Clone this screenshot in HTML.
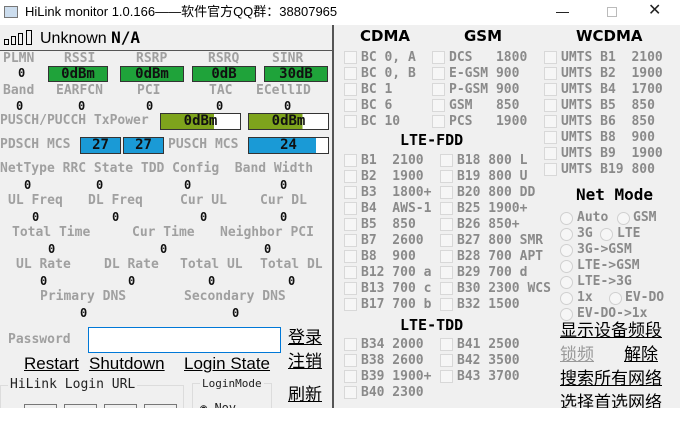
<!DOCTYPE html>
<html><head><meta charset="utf-8"><style>
*{margin:0;padding:0;box-sizing:border-box}
body{width:680px;height:424px;background:#fff;position:relative;overflow:hidden;font-family:"DejaVu Sans Mono","Liberation Mono",monospace}
.a{position:absolute;white-space:pre;line-height:16px}
.l{font-size:13px;font-weight:bold;color:#a0a0a0}
.v{font-size:12px;font-weight:bold;color:#111}
.c{font-size:13px;font-weight:bold;color:#8a8a8a}
.cb{position:absolute;width:13px;height:13px;border:1px solid #d8d8d8;background:#f6f6f6}
.r{position:absolute;width:13px;height:13px;border:1px solid #d0d0d0;border-radius:50%;background:#f6f6f6}
.h{font-family:"DejaVu Sans",sans-serif;font-weight:bold;font-size:15px;color:#000}
.box{position:absolute;border:1px solid #333;font-size:14px;text-align:center;line-height:15px;color:#111;font-weight:bold}
.cn{font-family:"Liberation Sans","Noto Sans CJK SC",sans-serif;font-size:17px;color:#000;text-decoration:underline}
.lk{font-family:"Liberation Sans","Noto Sans CJK SC",sans-serif;font-size:17px;color:#000;text-decoration:underline}
</style></head><body>
<div style="position:absolute;left:0;top:0;width:680px;height:25px;background:#fff"></div>
<div style="position:absolute;left:4px;top:6px;width:14px;height:12px;border:1px solid #777;background:#cde"></div>
<div class="a" style="left:25px;top:4px;font-family:'Liberation Sans','Noto Sans CJK SC',sans-serif;font-size:13px;color:#000">HiLink monitor 1.0.166——软件官方QQ群：38807965</div>
<div class="a" style="left:556px;top:4px;font-family:'Liberation Sans';font-size:13px">—</div>
<div style="position:absolute;left:607px;top:7px;width:10px;height:10px;border:1px solid #bbb"></div>
<div class="a" style="left:648px;top:2px;font-family:'DejaVu Sans';font-size:16px;color:#222">✕</div>
<div style="position:absolute;left:0;top:25px;width:680px;height:383px;background:#f0f0f0"></div>
<div style="position:absolute;left:332px;top:25px;width:2px;height:383px;background:#555"></div>
<div style="position:absolute;left:0;top:50px;width:332px;height:1px;background:#555"></div>
<!-- signal -->
<div style="position:absolute;left:4px;top:39px;width:5px;height:6px;border:1px solid #000"></div>
<div style="position:absolute;left:11px;top:36px;width:5px;height:9px;border:1px solid #000"></div>
<div style="position:absolute;left:18px;top:33px;width:5px;height:12px;border:1px solid #000"></div>
<div style="position:absolute;left:26px;top:30px;width:6px;height:15px;border:1px solid #000"></div>
<div class="a" style="left:40px;top:29px;font-family:'Liberation Sans';font-size:16px;line-height:18px">Unknown <b style="font-family:'DejaVu Sans Mono'">N/A</b></div>
<!-- row 1 -->
<div class="a l" style="left:3px;top:51px">PLMN</div>
<div class="a l" style="left:64px;top:51px">RSSI</div>
<div class="a l" style="left:136px;top:51px">RSRP</div>
<div class="a l" style="left:208px;top:51px">RSRQ</div>
<div class="a l" style="left:272px;top:51px">SINR</div>
<div class="a v" style="left:18px;top:65px">0</div>
<div class="box" style="left:48px;top:66px;width:60px;height:16px;background:#1fa33a">0dBm</div>
<div class="box" style="left:120px;top:66px;width:64px;height:16px;background:#1fa33a">0dBm</div>
<div class="box" style="left:192px;top:66px;width:64px;height:16px;background:#1fa33a">0dB</div>
<div class="box" style="left:264px;top:66px;width:64px;height:16px;background:#1fa33a">30dB</div>
<div class="a l" style="left:3px;top:83px">Band</div>
<div class="a l" style="left:56px;top:83px">EARFCN</div>
<div class="a l" style="left:137px;top:83px">PCI</div>
<div class="a l" style="left:209px;top:83px">TAC</div>
<div class="a l" style="left:256px;top:83px">ECellID</div>
<div class="a v" style="left:16px;top:98px">0</div>
<div class="a v" style="left:78px;top:98px">0</div>
<div class="a v" style="left:146px;top:98px">0</div>
<div class="a v" style="left:216px;top:98px">0</div>
<div class="a v" style="left:284px;top:98px">0</div>
<div class="a l" style="left:0;top:113px">PUSCH/PUCCH TxPower</div>
<div class="box" style="left:160px;top:113px;width:81px;height:17px;background:linear-gradient(90deg,#7ea41c 0 67%,#fff 67%)">0dBm</div>
<div class="box" style="left:248px;top:113px;width:81px;height:17px;background:linear-gradient(90deg,#7ea41c 0 68%,#fff 68%)">0dBm</div>
<div class="a l" style="left:0;top:137px">PDSCH MCS</div>
<div class="box" style="left:80px;top:137px;width:41px;height:17px;background:#1a9ad6;font-size:14px">27</div>
<div class="box" style="left:123px;top:137px;width:41px;height:17px;background:#1a9ad6;font-size:14px">27</div>
<div class="a l" style="left:168px;top:137px">PUSCH MCS</div>
<div class="box" style="left:248px;top:137px;width:81px;height:17px;background:linear-gradient(90deg,#1a9ad6 0 85%,#fff 85%);font-size:14px">24</div>
<div class="a l" style="left:0;top:161px">NetType RRC State TDD Config  Band Width</div>
<div class="a v" style="left:24px;top:177px">0</div>
<div class="a v" style="left:96px;top:177px">0</div>
<div class="a v" style="left:184px;top:177px">0</div>
<div class="a v" style="left:280px;top:177px">0</div>
<div class="a l" style="left:8px;top:193px">UL Freq</div>
<div class="a l" style="left:88px;top:193px">DL Freq</div>
<div class="a l" style="left:180px;top:193px">Cur UL</div>
<div class="a l" style="left:260px;top:193px">Cur DL</div>
<div class="a v" style="left:32px;top:209px">0</div>
<div class="a v" style="left:112px;top:209px">0</div>
<div class="a v" style="left:200px;top:209px">0</div>
<div class="a v" style="left:280px;top:209px">0</div>
<div class="a l" style="left:12px;top:225px">Total Time</div>
<div class="a l" style="left:132px;top:225px">Cur Time</div>
<div class="a l" style="left:220px;top:225px">Neighbor PCI</div>
<div class="a v" style="left:48px;top:241px">0</div>
<div class="a v" style="left:160px;top:241px">0</div>
<div class="a v" style="left:264px;top:241px">0</div>
<div class="a l" style="left:16px;top:257px">UL Rate</div>
<div class="a l" style="left:104px;top:257px">DL Rate</div>
<div class="a l" style="left:180px;top:257px">Total UL</div>
<div class="a l" style="left:260px;top:257px">Total DL</div>
<div class="a v" style="left:40px;top:273px">0</div>
<div class="a v" style="left:128px;top:273px">0</div>
<div class="a v" style="left:208px;top:273px">0</div>
<div class="a v" style="left:288px;top:273px">0</div>
<div class="a l" style="left:40px;top:289px">Primary DNS</div>
<div class="a l" style="left:184px;top:289px">Secondary DNS</div>
<div class="a v" style="left:80px;top:305px">0</div>
<div class="a v" style="left:232px;top:305px">0</div>
<div class="a l" style="left:8px;top:332px">Password</div>
<div style="position:absolute;left:88px;top:327px;width:193px;height:26px;border:1px solid #0078d7;background:#fff"></div>
<div class="a cn" style="left:288px;top:330px">登录</div>
<div class="a lk" style="left:24px;top:355px;line-height:18px">Restart</div>
<div class="a lk" style="left:89px;top:355px;line-height:18px">Shutdown</div>
<div class="a lk" style="left:184px;top:355px;line-height:18px">Login State</div>
<div class="a cn" style="left:288px;top:354px">注销</div>
<div style="position:absolute;left:0;top:385px;width:184px;height:30px;border:1px solid #dcdcdc"></div>
<div class="a" style="left:8px;top:377px;font-size:13px;color:#222;background:#f0f0f0;padding:0 2px">HiLink Login URL</div>
<div style="position:absolute;left:24px;top:404px;width:33px;height:10px;border:1px solid #777"></div>
<div style="position:absolute;left:64px;top:404px;width:33px;height:10px;border:1px solid #777"></div>
<div style="position:absolute;left:104px;top:404px;width:33px;height:10px;border:1px solid #777"></div>
<div style="position:absolute;left:144px;top:404px;width:33px;height:10px;border:1px solid #777"></div>
<div style="position:absolute;left:192px;top:383px;width:80px;height:30px;border:1px solid #dcdcdc"></div>
<div class="a" style="left:200px;top:376px;font-size:11px;color:#222;background:#f0f0f0;padding:0 2px">LoginMode</div>
<div class="a" style="left:200px;top:400px;font-size:12px;color:#222">◉ Nov</div>
<div class="cn a" style="left:288px;top:387px">刷新</div>
<div style="position:absolute;left:0;top:408px;width:680px;height:16px;background:#fff"></div>

<!-- right -->
<div class="a h" style="left:360px;top:28px">CDMA</div>
<div class="a h" style="left:464px;top:28px">GSM</div>
<div class="a h" style="left:576px;top:28px">WCDMA</div>
<div class="cb" style="left:344px;top:51px"></div><div class="a c" style="left:361px;top:50px">BC 0, A</div>
<div class="cb" style="left:344px;top:67px"></div><div class="a c" style="left:361px;top:66px">BC 0, B</div>
<div class="cb" style="left:344px;top:83px"></div><div class="a c" style="left:361px;top:82px">BC 1</div>
<div class="cb" style="left:344px;top:99px"></div><div class="a c" style="left:361px;top:98px">BC 6</div>
<div class="cb" style="left:344px;top:115px"></div><div class="a c" style="left:361px;top:114px">BC 10</div>
<div class="cb" style="left:432px;top:51px"></div><div class="a c" style="left:449px;top:50px">DCS   1800</div>
<div class="cb" style="left:432px;top:67px"></div><div class="a c" style="left:449px;top:66px">E-GSM 900</div>
<div class="cb" style="left:432px;top:83px"></div><div class="a c" style="left:449px;top:82px">P-GSM 900</div>
<div class="cb" style="left:432px;top:99px"></div><div class="a c" style="left:449px;top:98px">GSM   850</div>
<div class="cb" style="left:432px;top:115px"></div><div class="a c" style="left:449px;top:114px">PCS   1900</div>
<div class="cb" style="left:544px;top:51px"></div><div class="a c" style="left:561px;top:50px">UMTS B1  2100</div>
<div class="cb" style="left:544px;top:67px"></div><div class="a c" style="left:561px;top:66px">UMTS B2  1900</div>
<div class="cb" style="left:544px;top:83px"></div><div class="a c" style="left:561px;top:82px">UMTS B4  1700</div>
<div class="cb" style="left:544px;top:99px"></div><div class="a c" style="left:561px;top:98px">UMTS B5  850</div>
<div class="cb" style="left:544px;top:115px"></div><div class="a c" style="left:561px;top:114px">UMTS B6  850</div>
<div class="cb" style="left:544px;top:131px"></div><div class="a c" style="left:561px;top:130px">UMTS B8  900</div>
<div class="cb" style="left:544px;top:147px"></div><div class="a c" style="left:561px;top:146px">UMTS B9  1900</div>
<div class="cb" style="left:544px;top:163px"></div><div class="a c" style="left:561px;top:162px">UMTS B19 800</div>
<div class="a h" style="left:400px;top:132px;font-family:'DejaVu Sans Mono';font-size:15px">LTE-FDD</div>
<div class="cb" style="left:344px;top:154px"></div><div class="a c" style="left:361px;top:153px">B1  2100</div>
<div class="cb" style="left:344px;top:170px"></div><div class="a c" style="left:361px;top:169px">B2  1900</div>
<div class="cb" style="left:344px;top:186px"></div><div class="a c" style="left:361px;top:185px">B3  1800+</div>
<div class="cb" style="left:344px;top:202px"></div><div class="a c" style="left:361px;top:201px">B4  AWS-1</div>
<div class="cb" style="left:344px;top:218px"></div><div class="a c" style="left:361px;top:217px">B5  850</div>
<div class="cb" style="left:344px;top:234px"></div><div class="a c" style="left:361px;top:233px">B7  2600</div>
<div class="cb" style="left:344px;top:250px"></div><div class="a c" style="left:361px;top:249px">B8  900</div>
<div class="cb" style="left:344px;top:266px"></div><div class="a c" style="left:361px;top:265px">B12 700 a</div>
<div class="cb" style="left:344px;top:282px"></div><div class="a c" style="left:361px;top:281px">B13 700 c</div>
<div class="cb" style="left:344px;top:298px"></div><div class="a c" style="left:361px;top:297px">B17 700 b</div>
<div class="cb" style="left:440px;top:154px"></div><div class="a c" style="left:457px;top:153px">B18 800 L</div>
<div class="cb" style="left:440px;top:170px"></div><div class="a c" style="left:457px;top:169px">B19 800 U</div>
<div class="cb" style="left:440px;top:186px"></div><div class="a c" style="left:457px;top:185px">B20 800 DD</div>
<div class="cb" style="left:440px;top:202px"></div><div class="a c" style="left:457px;top:201px">B25 1900+</div>
<div class="cb" style="left:440px;top:218px"></div><div class="a c" style="left:457px;top:217px">B26 850+</div>
<div class="cb" style="left:440px;top:234px"></div><div class="a c" style="left:457px;top:233px">B27 800 SMR</div>
<div class="cb" style="left:440px;top:250px"></div><div class="a c" style="left:457px;top:249px">B28 700 APT</div>
<div class="cb" style="left:440px;top:266px"></div><div class="a c" style="left:457px;top:265px">B29 700 d</div>
<div class="cb" style="left:440px;top:282px"></div><div class="a c" style="left:457px;top:281px">B30 2300 WCS</div>
<div class="cb" style="left:440px;top:298px"></div><div class="a c" style="left:457px;top:297px">B32 1500</div>
<div class="a h" style="left:400px;top:317px;font-family:'DejaVu Sans Mono';font-size:15px">LTE-TDD</div>
<div class="cb" style="left:344px;top:338px"></div><div class="a c" style="left:361px;top:337px">B34 2000</div>
<div class="cb" style="left:344px;top:354px"></div><div class="a c" style="left:361px;top:353px">B38 2600</div>
<div class="cb" style="left:344px;top:370px"></div><div class="a c" style="left:361px;top:369px">B39 1900+</div>
<div class="cb" style="left:344px;top:386px"></div><div class="a c" style="left:361px;top:385px">B40 2300</div>
<div class="cb" style="left:440px;top:338px"></div><div class="a c" style="left:457px;top:337px">B41 2500</div>
<div class="cb" style="left:440px;top:354px"></div><div class="a c" style="left:457px;top:353px">B42 3500</div>
<div class="cb" style="left:440px;top:370px"></div><div class="a c" style="left:457px;top:369px">B43 3700</div>
<div class="a h" style="left:576px;top:187px;font-family:'DejaVu Sans Mono';font-size:16px">Net Mode</div>
<div class="r" style="left:560px;top:212px"></div><div class="a c" style="left:577px;top:210px">Auto</div>
<div class="r" style="left:617px;top:212px"></div><div class="a c" style="left:633px;top:210px">GSM</div>
<div class="r" style="left:560px;top:228px"></div><div class="a c" style="left:577px;top:226px">3G</div>
<div class="r" style="left:600px;top:228px"></div><div class="a c" style="left:617px;top:226px">LTE</div>
<div class="r" style="left:560px;top:244px"></div><div class="a c" style="left:577px;top:242px">3G->GSM</div>
<div class="r" style="left:560px;top:260px"></div><div class="a c" style="left:577px;top:258px">LTE->GSM</div>
<div class="r" style="left:560px;top:276px"></div><div class="a c" style="left:577px;top:274px">LTE->3G</div>
<div class="r" style="left:560px;top:292px"></div><div class="a c" style="left:577px;top:290px">1x</div>
<div class="r" style="left:609px;top:292px"></div><div class="a c" style="left:625px;top:290px">EV-DO</div>
<div class="r" style="left:560px;top:308px"></div><div class="a c" style="left:577px;top:306px">EV-DO->1x</div>
<div class="a cn" style="left:560px;top:323px">显示设备频段</div>
<div class="a cn" style="left:560px;top:347px;color:#999">锁频</div>
<div class="a cn" style="left:624px;top:347px">解除</div>
<div class="a cn" style="left:560px;top:371px">搜索所有网络</div>
<div class="a cn" style="left:560px;top:395px;text-decoration:none">选择首选网络</div>
<div style="position:absolute;left:0;top:408px;width:680px;height:16px;background:#fff"></div>
</body></html>
